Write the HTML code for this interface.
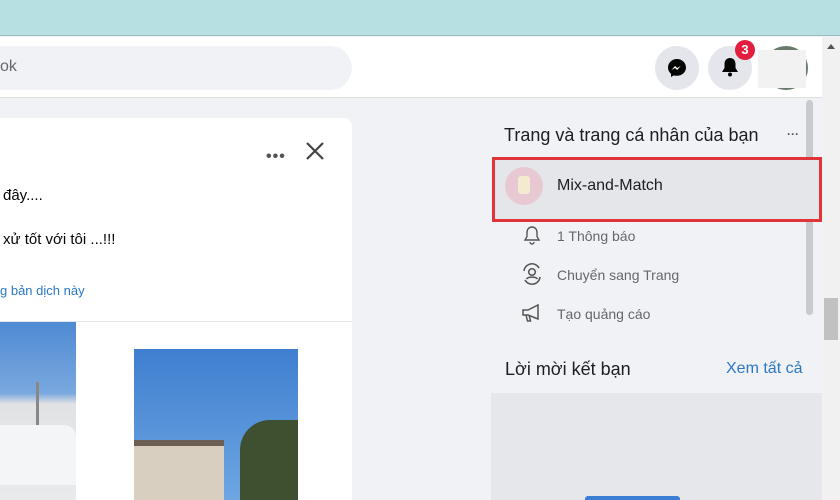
<!DOCTYPE html>
<html><head><meta charset="utf-8"><style>
*{margin:0;padding:0;box-sizing:border-box}
body{width:840px;height:500px;overflow:hidden;position:relative;background:#f0f2f5;font-family:"Liberation Sans","DejaVu Sans",sans-serif;color:#050505}
.a{position:absolute}
</style></head><body>
<div class="a" style="left:0;top:0;width:840px;height:36px;background:#b7e0e3;border-bottom:1px solid #9bb"></div>
<div class="a" style="left:0;top:37px;width:822px;height:61px;background:#fff;border-bottom:1px solid #ddd"></div>
<div class="a" style="left:-20px;top:46px;width:372px;height:44px;border-radius:22px;background:#f0f2f5"></div>
<div class="a" style="left:0;top:58px;font-size:16px;color:#65676b">ok</div>
<div class="a" style="left:655px;top:46px;width:44px;height:44px;border-radius:50%;background:#e4e6eb"></div>
<svg class="a" style="left:667px;top:58px" width="20" height="20" viewBox="0 0 20 20"><path d="M10 1C5 1 1 4.7 1 9.5c0 2.6 1.1 4.8 3 6.3V19l2.8-1.6c1 .3 2 .4 3.2.4 5 0 9-3.7 9-8.3S15 1 10 1z" fill="#050505"/><path d="M4.5 12l3.5-4 2.2 2 3.5-2-3.5 4-2.2-2z" fill="#fff"/></svg>
<div class="a" style="left:708px;top:46px;width:44px;height:44px;border-radius:50%;background:#e4e6eb"></div>
<svg class="a" style="left:721px;top:57px" width="18" height="20" viewBox="0 0 18 20"><path d="M9 1c-3.5 0-5.5 2.7-5.5 6v4L1 15h16l-2.5-4V7C14.5 3.7 12.5 1 9 1z" fill="#050505"/><circle cx="9" cy="17.5" r="2" fill="#050505"/></svg>
<div class="a" style="left:735px;top:40px;width:20px;height:20px;border-radius:50%;background:#e41e3f;color:#fff;font-size:13px;font-weight:bold;text-align:center;line-height:20px">3</div>
<div class="a" style="left:764px;top:46px;width:44px;height:44px;border-radius:50%;background:#6a7a6a"></div>
<div class="a" style="left:758px;top:50px;width:48px;height:38px;background:#f2f2f2"></div>
<div class="a" style="left:822px;top:37px;width:18px;height:463px;background:#f1f1f1"></div>
<div class="a" style="left:827px;top:44px;width:0;height:0;border-left:4px solid transparent;border-right:4px solid transparent;border-bottom:5px solid #555"></div>
<div class="a" style="left:824px;top:298px;width:14px;height:42px;background:#c1c1c1"></div>
<div class="a" style="left:806px;top:100px;width:7px;height:215px;border-radius:4px;background:#c8cace"></div>
<div class="a" style="left:0;top:118px;width:352px;height:382px;background:#fff;border-radius:0 8px 0 0"></div>
<div class="a" style="left:266px;top:148px;font-size:16px;letter-spacing:1px;font-weight:bold;color:#555">•••</div>
<svg class="a" style="left:305px;top:141px" width="20" height="20" viewBox="0 0 20 20"><path d="M2 2L18 18M18 2L2 18" stroke="#444" stroke-width="2.2"/></svg>
<div class="a" style="left:3px;top:187px;font-size:15px">đây....</div>
<div class="a" style="left:3px;top:231px;font-size:15px">xử tốt với tôi ...!!!</div>
<div class="a" style="left:0;top:283px;font-size:13px;color:#2b78c5">g bản dịch này</div>
<div class="a" style="left:0;top:321px;width:352px;height:1px;background:#e4e6eb"></div>
<div class="a" style="left:0;top:322px;width:76px;height:178px;background:linear-gradient(#4f8ad4 0%,#7aa8de 40%,#e0e2e4 46%,#e9eaec 100%)"></div>
<div class="a" style="left:36px;top:382px;width:3px;height:60px;background:#888"></div>
<div class="a" style="left:0;top:425px;width:76px;height:60px;background:#f4f5f6;border-radius:0 12px 0 0"></div>
<div class="a" style="left:134px;top:349px;width:164px;height:151px;background:linear-gradient(#3f7fd0,#6ea6e2)"></div>
<div class="a" style="left:134px;top:440px;width:90px;height:60px;background:#d8cfc0"></div>
<div class="a" style="left:134px;top:440px;width:90px;height:6px;background:#6a5e55"></div>
<div class="a" style="left:240px;top:420px;width:58px;height:80px;background:#3f5030;border-radius:30px 0 0 0"></div>
<div class="a" style="left:504px;top:125px;font-size:18px;color:#1c1e21">Trang và trang cá nhân của bạn</div>
<div class="a" style="left:787px;top:127px;font-size:12px;color:#555;font-weight:bold">···</div>
<div class="a" style="left:492px;top:157px;width:330px;height:65px;background:#e4e6e9;border:3px solid #e0343a"></div>
<div class="a" style="left:505px;top:167px;width:38px;height:38px;border-radius:50%;background:#e8c9d3"></div>
<div class="a" style="left:518px;top:176px;width:12px;height:18px;background:#f3ead0;border-radius:3px"></div>
<div class="a" style="left:557px;top:177px;font-size:16px;color:#1c1e21">Mix-and-Match</div>
<svg class="a" style="left:522px;top:225px" width="20" height="22" viewBox="0 0 20 22"><path d="M10 2c-3 0-5 2.4-5 5.5v4L3 15h14l-2-3.5v-4C15 4.4 13 2 10 2zM8 17a2 2 0 0 0 4 0" fill="none" stroke="#555" stroke-width="1.4"/></svg>
<div class="a" style="left:557px;top:228px;font-size:14px;color:#65676b">1 Thông báo</div>
<svg class="a" style="left:521px;top:263px" width="22" height="22" viewBox="0 0 22 22"><circle cx="11" cy="9" r="3.3" fill="none" stroke="#555" stroke-width="1.5"/><path d="M5.5 16c1.5-2.5 9.5-2.5 11 0M3 8a8 8 0 0 1 15-3M19 14a8 8 0 0 1-15 3" fill="none" stroke="#555" stroke-width="1.5"/></svg>
<div class="a" style="left:557px;top:267px;font-size:14px;color:#65676b">Chuyển sang Trang</div>
<svg class="a" style="left:521px;top:302px" width="22" height="22" viewBox="0 0 22 22"><path d="M2 8h5l10-5v14L7 13H2zM5 13l1.5 6h3L8 13" fill="none" stroke="#555" stroke-width="1.5"/></svg>
<div class="a" style="left:557px;top:306px;font-size:14px;color:#65676b">Tạo quảng cáo</div>
<div class="a" style="left:505px;top:359px;font-size:18px;color:#1c1e21">Lời mời kết bạn</div>
<div class="a" style="left:726px;top:360px;font-size:16px;color:#2b78c5">Xem tất cả</div>
<div class="a" style="left:491px;top:393px;width:331px;height:107px;background:#e6e7ea"></div>
<div class="a" style="left:585px;top:496px;width:95px;height:4px;background:#3b7fd4;border-radius:3px 3px 0 0"></div>
</body></html>
